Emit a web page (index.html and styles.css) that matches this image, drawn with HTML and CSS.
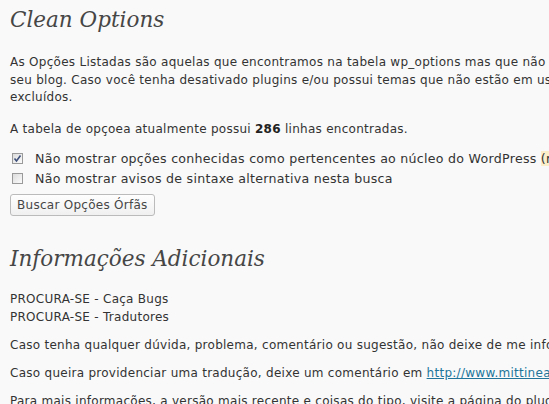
FILE: index.html
```html
<!DOCTYPE html>
<html lang="pt-BR">
<head>
<meta charset="utf-8">
<title>Clean Options</title>
<link rel="stylesheet" href="styles.css">
</head>
<body>
<div class="wrap">
  <h2 class="title">Clean Options</h2>
  <p class="intro">As Opções Listadas são aquelas que encontramos na tabela wp_options mas que não são referenciadas no código do<br>seu blog. Caso você tenha desativado plugins e/ou possui temas que não estão em uso, suas opções podem ser<br>excluídos.</p>
  <p class="count">A tabela de opçoea atualmente possui <strong>286</strong> linhas encontradas.</p>
  <form class="options">
    <label class="check"><input type="checkbox" checked><span class="box"><svg viewBox="0 0 11 11" width="11" height="11"><path d="M2.5 5.5 L4.5 8 L8.5 2.5" fill="none" stroke="#3d4f7a" stroke-width="1.6"/></svg></span><span>Não mostrar opções conhecidas como pertencentes ao núcleo do WordPress <span class="hl">(recomendado)</span></span></label>
    <label class="check"><input type="checkbox"><span class="box"></span><span>Não mostrar avisos de sintaxe alternativa nesta busca</span></label>
    <button type="button" class="button">Buscar Opções Órfãs</button>
  </form>
  <h2 class="title second">Informações Adicionais</h2>
  <p class="wanted">PROCURA-SE - Caça Bugs<br>PROCURA-SE - Tradutores</p>
  <p class="info">Caso tenha qualquer dúvida, problema, comentário ou sugestão, não deixe de me informar.</p>
  <p class="info">Caso queira providenciar uma tradução, deixe um comentário em <a href="#">http://www.mittineague.com/dev/co.php</a></p>
  <p class="info">Para mais informações, a versão mais recente e coisas do tipo, visite a página do plugin.</p>
</div>
</body>
</html>
```

FILE: styles.css
```css
html, body {
  margin: 0;
  padding: 0;
  background: #f9f9f9;
  overflow: hidden;
}
body {
  width: 549px;
  height: 404px;
  font-family: "DejaVu Sans", Verdana, sans-serif;
  font-size: 12px;
  letter-spacing: 0.27px;
  color: #333;
}
.wrap {
  padding-left: 10px;
  width: 900px;
}
.title {
  font-family: "DejaVu Serif", Georgia, serif;
  font-style: italic;
  font-weight: normal;
  font-size: 21.5px;
  letter-spacing: 0;
  line-height: 29px;
  color: #464646;
  margin: 0;
  padding: 5px 0 0;
}
.title.second {
  padding-top: 0;
  margin-top: 28px;
}
p {
  margin: 0;
  line-height: 17.5px;
  white-space: nowrap;
}
.intro {
  margin-top: 20px;
}
.count {
  margin-top: 14px;
}
strong {
  color: #222;
}
.options {
  margin-top: 10px;
  display: flex;
  flex-direction: column;
  align-items: flex-start;
}
.check {
  display: flex;
  align-items: center;
  height: 20px;
  white-space: nowrap;
  font-size: 12.6px;
}
.check input {
  position: absolute;
  opacity: 0;
  width: 0;
  height: 0;
  margin: 0;
}
.box {
  width: 11px;
  height: 11px;
  box-sizing: border-box;
  border: 1px solid #9a9a9a;
  background: linear-gradient(135deg, #dcdcdc, #fbfbfb);
  margin: 0 12px 0 2px;
  display: flex;
  align-items: center;
  justify-content: center;
}
.box svg {
  display: block;
  flex: none;
  margin: -1px;
}
.hl {
  background: #fbefc9;
}
.button {
  margin-top: 6px;
  height: 22px;
  padding: 0 6px;
  border: 1px solid #bbb;
  border-radius: 3px;
  background: linear-gradient(#fefefe, #f0f0f0);
  font-family: "DejaVu Sans", Verdana, sans-serif;
  font-size: 12px;
  letter-spacing: 0.27px;
  color: #464646;
}
.wanted {
  margin-top: 18px;
}
.info {
  margin-top: 10.5px;
}
a {
  color: #21759b;
}
```
